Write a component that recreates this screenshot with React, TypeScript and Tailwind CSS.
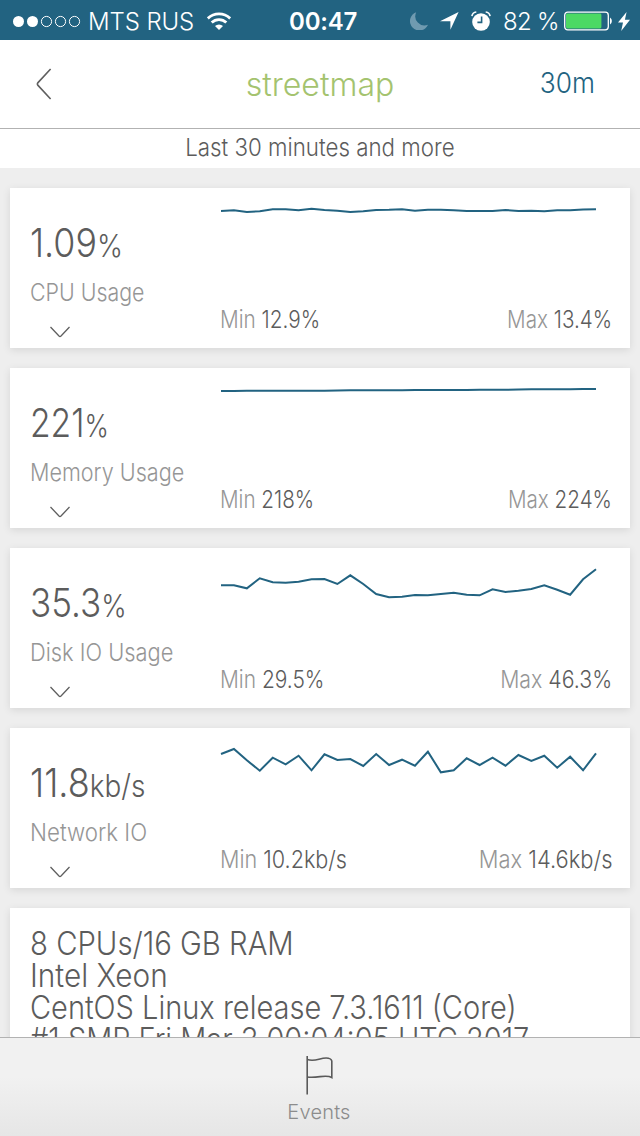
type Metric = {
  label: string;
  value: string;
  unit: string;
  min: string;
  max: string;
  valueClass: string;
  labelClass: string;
  minClass: string;
  maxClass: string;
  points: number[];
};

const metrics: Metric[] = [
  {
    label: 'CPU Usage',
    value: '1.09',
    unit: '%',
    min: '12.9%',
    max: '13.4%',
    valueClass: 'scale-x-[0.895]',
    labelClass: 'scale-x-[0.89]',
    minClass: 'scale-x-[0.865]',
    maxClass: 'scale-x-[0.86]',
    points: [
      23, 22.3, 24, 23.3, 21.3, 21.3, 22.3, 20.7, 22, 22.7, 24, 23.3, 22, 21.8, 21.3, 22.7, 21.7, 21.8, 22.3, 23, 23,
      23, 22, 23, 22.7, 23.3, 22.3, 22.3, 21.5, 21.3,
    ],
  },
  {
    label: 'Memory Usage',
    value: '221',
    unit: '%',
    min: '218%',
    max: '224%',
    valueClass: 'scale-x-[0.84]',
    labelClass: 'scale-x-[0.9]',
    minClass: 'scale-x-[0.86]',
    maxClass: 'scale-x-[0.86]',
    points: [
      23, 23, 22.8, 22.8, 22.8, 22.8, 22.7, 22.7, 22.7, 22.5, 22.3, 22.3, 22.3, 22.3, 22.2, 22, 22, 22, 22, 22, 21.8,
      21.8, 21.7, 21.5, 21.3, 21.3, 21.3, 21.3, 21, 21,
    ],
  },
  {
    label: 'Disk IO Usage',
    value: '35.3',
    unit: '%',
    min: '29.5%',
    max: '46.3%',
    valueClass: 'scale-x-[0.875]',
    labelClass: 'scale-x-[0.91]',
    minClass: 'scale-x-[0.872]',
    maxClass: 'scale-x-[0.888]',
    points: [
      37.3, 37.3, 40.3, 30.3, 34.3, 34.7, 33.7, 31.3, 31, 36, 27.3, 36, 46, 49.3, 48.7, 47, 47.3, 46, 44.7, 46.7, 47.3,
      41.3, 44, 42.7, 41, 37.3, 41.7, 46.7, 31.3, 21.3,
    ],
  },
  {
    label: 'Network IO',
    value: '11.8',
    unit: 'kb/s',
    min: '10.2kb/s',
    max: '14.6kb/s',
    valueClass: 'scale-x-[0.9]',
    labelClass: 'scale-x-[0.93]',
    minClass: 'scale-x-[0.9]',
    maxClass: 'scale-x-[0.913]',
    points: [
      26, 21, 32.3, 42.7, 29.7, 36.3, 27.7, 42.3, 26.3, 32, 31, 38, 26, 37, 31.7, 37.7, 23.7, 44.3, 42.3, 30.3, 37,
      29.7, 37.7, 27, 33, 27.7, 39.7, 28.7, 42.3, 25.3,
    ],
  },
];

const info = [
  { text: '8 CPUs/16 GB RAM', className: 'scale-x-[0.915]' },
  { text: 'Intel Xeon', className: 'scale-x-[0.93]' },
  { text: 'CentOS Linux release 7.3.1611 (Core)', className: 'scale-x-[0.906]' },
  { text: '#1 SMP Fri Mar 3 00:04:05 UTC 2017', className: 'scale-x-[0.905]' },
];

function StatusBar() {
  return (
    <div className="grid h-10 shrink-0 grid-cols-[289px_1fr_230px] items-center bg-[#226381] text-2xl leading-10 text-white">
      <div className="flex h-10 items-center pl-3">
        <svg className="h-10 w-[70px]" viewBox="0 0 70 40" fill="none" stroke="#fff">
          <circle cx="6.5" cy="20.5" r="5.5" fill="#fff" stroke="none" />
          <circle cx="20.5" cy="20.5" r="5.5" fill="#fff" stroke="none" />
          <circle cx="34.5" cy="20.5" r="5.1" />
          <circle cx="48.5" cy="20.5" r="5.1" />
          <circle cx="62.5" cy="20.5" r="5.1" />
        </svg>
        <span className="ml-[6px] w-[119px] whitespace-nowrap pt-0.5 font-[350] tracking-[-0.1px]">MTS RUS</span>
        {/* wifi */}
        <svg className="h-[19px] w-[24px]" viewBox="0 0 24 19" fill="none" stroke="#fff" strokeWidth="2.8">
          <path d="M.8 6.4a16 16 0 0 1 22.4 0" />
          <path d="M4.7 10.6a10.4 10.4 0 0 1 14.6 0" />
          <path d="M8 14.1a5.8 5.8 0 0 1 8 0l-4 4z" fill="#fff" stroke="none" />
        </svg>
      </div>
      <span className="whitespace-nowrap pt-0.5 font-semibold tracking-[-0.2px]">00:47</span>
      <div className="flex h-10 items-center">
        {/* do not disturb */}
        <svg className="h-[18px] w-[18px] shrink-0" viewBox="0 0 18 18" fill="#6f9ab0">
          <path d="M6.2.2A9.4 9.4 0 1 0 18 12.8 9.3 9.3 0 0 1 6.2.2z" />
        </svg>
        {/* location */}
        <svg className="ml-[12px] h-[18px] w-[19px] shrink-0" viewBox="0 0 19 18" fill="#fff">
          <path d="M18.6 0 10.4 17.8V9.2H0z" />
        </svg>
        {/* alarm */}
        <svg className="ml-[12px] h-5 w-5 shrink-0" viewBox="0 0 20 20">
          <circle cx="10" cy="11" r="8.8" fill="#fff" />
          <path d="M.9 5.2A5 5 0 0 1 5.3 1M14.7 1a5 5 0 0 1 4.4 4.2" fill="none" stroke="#fff" strokeWidth="1.6" />
          <path d="M10.6 5.4v6H6.4" fill="none" stroke="#226381" strokeWidth="1.6" />
        </svg>
        <span className="ml-[12px] w-[61px] shrink-0 whitespace-nowrap pt-0.5 font-[350] tracking-[-0.7px]">82 %</span>
        <svg className="h-5 w-[50px] shrink-0" viewBox="0 0 50 20">
          <rect x=".7" y="1.2" width="43.6" height="17.6" rx="3" fill="none" stroke="#fff" strokeWidth="1.3" />
          <rect x="2" y="2.6" width="35.4" height="14.8" rx="1.4" fill="#4cd964" />
          <path d="M46 6.6a4 4 0 0 1 0 6.8z" fill="#fff" />
        </svg>
        {/* charging */}
        <svg className="ml-[4px] h-[19px] w-3 shrink-0" viewBox="0 0 12 19" fill="#fff">
          <path d="M8.600 0 0 10.600h5L3.200 19 12 7.800H6.900z" />
        </svg>
      </div>
    </div>
  );
}

function Header() {
  return (
    <header className="grid h-[89px] shrink-0 grid-cols-[200px_240px_200px] items-center border-b border-[#b2b2b2] bg-white">
      <svg className="ml-9 h-8 w-4" viewBox="0 0 16 32" fill="none" stroke="#5f5f5f" strokeWidth="1.6">
        <path d="M14.6 1 2 14.6q-1.2 1.4 0 2.8L14.6 31" />
      </svg>
      <h1 className="pt-0.5 text-center text-[32px] font-light text-[#a4c36f]">streetmap</h1>
      <span className="-mt-0.5 mr-[45px] origin-right scale-x-[0.94] text-right text-[28px] font-light text-[#226381]">
        30m
      </span>
    </header>
  );
}

function Sparkline({ points }: { points: number[] }) {
  const step = 375 / (points.length - 1);
  return (
    <svg className="h-[60px] w-full" viewBox="0 0 400 60" preserveAspectRatio="xMinYMin" fill="none">
      <polyline
        points={points.map((y, i) => `${(1 + i * step).toFixed(2)},${y}`).join(' ')}
        stroke="#226381"
        strokeWidth="2"
      />
    </svg>
  );
}

function MetricCard({ metric }: { metric: Metric }) {
  return (
    <section className="flex h-40 shrink-0 bg-white pl-5 shadow-[0_2px_8px_rgba(0,0,0,0.1)]">
      <div className="flex w-[190px] shrink-0 flex-col items-start whitespace-nowrap">
        <div className={`mt-[31px] h-12 origin-left font-light leading-[48px] text-[#5c5c5c] ${metric.valueClass}`}>
          <span className="text-[40px]">{metric.value}</span>
          <span className="text-[31px]">{metric.unit}</span>
        </div>
        <div className={`mt-[10px] origin-left text-2xl font-light text-[#969696] ${metric.labelClass}`}>
          {metric.label}
        </div>
        <svg className="ml-5 mt-[17px] h-3 w-5" viewBox="0 0 20 12" fill="none" stroke="#5f5f5f" strokeWidth="1.3">
          <path d="M.5 1 9 10q1 1 2 0l8.500-9" />
        </svg>
      </div>
      <div className="flex w-[400px] shrink-0 flex-col justify-between pb-[11px]">
        <Sparkline points={metric.points} />
        <div className="flex justify-between whitespace-nowrap pr-[8px] text-2xl font-light leading-[34px] text-[#5c5c5c]">
          <span className={`origin-left ${metric.minClass}`}>
            <span className="text-[#969696]">Min</span> {metric.min}
          </span>
          <span className={`origin-right ${metric.maxClass}`}>
            <span className="text-[#969696]">Max</span> {metric.max}
          </span>
        </div>
      </div>
    </section>
  );
}

export default function App() {
  return (
    <div className="flex h-[1136px] w-[640px] flex-col overflow-hidden bg-[#eee] font-['Inter',sans-serif]">
      <StatusBar />
      <Header />
      <div className="flex h-[39px] shrink-0 justify-center bg-white text-2xl font-light leading-[38px] text-[#5c5c5c]">
        <span className="scale-x-[0.93] whitespace-nowrap">Last 30 minutes and more</span>
      </div>
      <main className="flex min-h-0 flex-1 flex-col gap-5 overflow-hidden px-[10px] pt-5">
        {metrics.map((metric) => (
          <MetricCard key={metric.label} metric={metric} />
        ))}
        <section className="h-[200px] shrink-0 bg-white px-5 pt-5 text-[32px] font-light leading-8 text-[#5c5c5c] shadow-[0_2px_8px_rgba(0,0,0,0.1)]">
          {info.map((line) => (
            <div key={line.text} className={`w-max origin-left whitespace-nowrap ${line.className}`}>
              {line.text}
            </div>
          ))}
        </section>
      </main>
      <footer className="flex h-[99px] shrink-0 flex-col items-center border-t border-[#b2b2b2] bg-linear-to-b from-[#f1f1f1] from-40% to-[#e6e6e6]">
        <svg className="mt-[17px] h-10 w-7" viewBox="0 0 28 40" fill="none" stroke="#5a5a5a" strokeWidth="1.6">
          <path d="M1.200 1v38.500" />
          <path d="M1.200 4.500c8 2.500 12-1.500 19-1.500 3 0 5 1 5.600 3v16.500c-6-3.500-14 1-24.600-.500" />
        </svg>
        <span className="mr-0.5 mt-[3px] text-xl font-light leading-7 tracking-[0.2px] text-[#8c8c8c]">Events</span>
      </footer>
    </div>
  );
}
